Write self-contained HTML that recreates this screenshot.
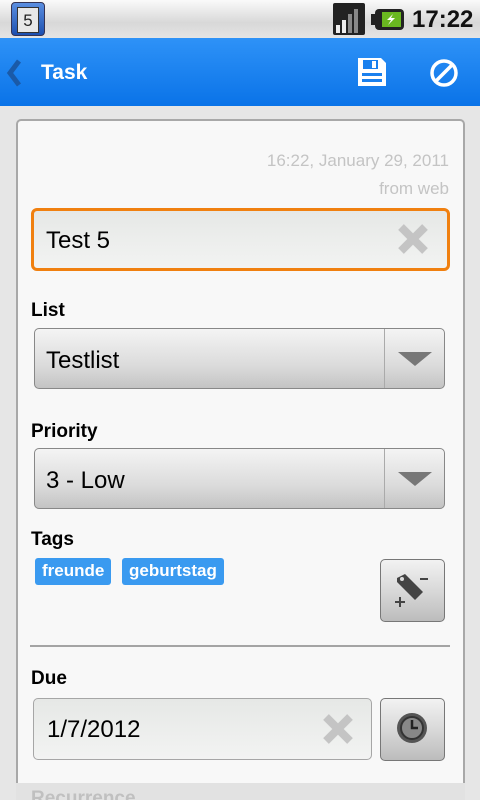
<!DOCTYPE html>
<html><head><meta charset="utf-8"><style>
*{margin:0;padding:0;box-sizing:border-box}
html,body{width:480px;height:800px;overflow:hidden}
body{background:#e6e6e6;font-family:"Liberation Sans","DejaVu Sans",sans-serif;position:relative}
.abs{position:absolute}
.status{left:0;top:0;width:480px;height:38px;background:linear-gradient(#fafafa,#d8d8d8 60%,#e4e4e4)}
.bar{left:0;top:38px;width:480px;height:68px;background:linear-gradient(#2e92f7,#0a73e8)}
.card{left:16px;top:119px;width:449px;height:681px;background:#f8f8f8;border:2px solid #a8a8a8;border-bottom:none;border-radius:5px 5px 0 0}
.lbl{font-weight:bold;font-size:19px;color:#000;left:31px}
.field{background:linear-gradient(#e6e8e6,#f2f3f2);border:1px solid #a6a6a6;border-radius:5px}
.dd{background:linear-gradient(#f4f4f4,#dcdcdc 60%,#c4c4c4);border:1px solid #888;border-radius:5px}
.txt{font-size:24px;color:#000}
.chip{background:#3a9af0;color:#fff;font-weight:bold;font-size:17px;border-radius:3px;height:27px;line-height:26px;padding:0 7px}
.btn{background:linear-gradient(#f2f2f2,#d6d6d6 55%,#bcbcbc);border:1px solid #777;border-radius:5px}
</style></head><body>
<div class="abs status"></div>
<div class="abs" style="left:11px;top:2px;width:34px;height:34px;border-radius:4px;background:linear-gradient(#5a8ee0,#1c4fb0);border:1px solid #335"></div>
<div class="abs" style="left:17px;top:7px;width:22px;height:26px;background:#e8e8e8;border:1px solid #333;font-size:17px;text-align:center;line-height:26px;color:#222">5</div>
<svg class="abs" style="left:333px;top:3px" width="32" height="32"><rect width="32" height="32" rx="2" fill="#222"/><rect x="3" y="22" width="4" height="8" fill="#eee"/><rect x="9" y="17" width="4" height="13" fill="#eee"/><rect x="15" y="11" width="4" height="19" fill="#888"/><rect x="21" y="6" width="4" height="24" fill="#888"/></svg>
<svg class="abs" style="left:371px;top:9px" width="33" height="21"><rect x="0" y="5" width="5" height="11" fill="#222"/><rect x="4" y="0" width="29" height="21" rx="4" fill="#222"/><rect x="11" y="3" width="19" height="15" fill="#6ab820"/><path d="M22 5l-6 6h4l-3 5 7-7h-4z" fill="#fff"/></svg>
<div class="abs" style="left:412px;top:6px;font-size:24px;font-weight:bold;color:#111">17:22</div>
<div class="abs bar"></div>
<svg class="abs" style="left:5px;top:59px" width="16" height="28"><path d="M14 2L5 14l9 12" fill="none" stroke="#1a5aa8" stroke-width="5"/></svg>
<div class="abs" style="left:41px;top:61px;font-size:21px;font-weight:bold;color:#fff">Task</div>
<svg class="abs" style="left:358px;top:58px" width="28" height="28"><path d="M0 0h23l5 5v23H0z" fill="#fff"/><rect x="5" y="2" width="15" height="9" fill="#1a80ee"/><rect x="14" y="3" width="4" height="7" fill="#fff"/><rect x="4" y="15" width="20" height="3" fill="#1a80ee"/><rect x="4" y="21" width="20" height="3" fill="#1a80ee"/></svg>
<svg class="abs" style="left:429px;top:58px" width="30" height="30"><circle cx="15" cy="15" r="12" fill="none" stroke="#fff" stroke-width="3.5"/><path d="M23 7L7 23" stroke="#fff" stroke-width="3.5"/></svg>
<div class="abs card"></div>
<div class="abs" style="right:31px;top:147px;font-size:17px;color:#c4c4c4;text-align:right;line-height:28px">16:22, January 29, 2011<br>from web</div>
<div class="abs field" style="left:31px;top:208px;width:419px;height:63px;border:3px solid #f08010;border-radius:6px"></div>
<div class="abs txt" style="left:46px;top:227px">Test 5</div>
<svg class="abs" style="left:397px;top:223px" width="32" height="32"><path d="M4 4L28 28M28 4L4 28" stroke="#c4c4c4" stroke-width="8"/></svg>
<div class="abs lbl" style="top:300px">List</div>
<div class="abs dd" style="left:34px;top:328px;width:411px;height:61px"></div>
<div class="abs" style="left:384px;top:329px;width:1px;height:59px;background:#aaa"></div>
<svg class="abs" style="left:398px;top:352px" width="34" height="14"><path d="M0 0h34L17 14z" fill="#777"/></svg>
<div class="abs txt" style="left:46px;top:347px">Testlist</div>
<div class="abs lbl" style="top:421px">Priority</div>
<div class="abs dd" style="left:34px;top:448px;width:411px;height:61px"></div>
<div class="abs" style="left:384px;top:449px;width:1px;height:59px;background:#aaa"></div>
<svg class="abs" style="left:398px;top:472px" width="34" height="14"><path d="M0 0h34L17 14z" fill="#777"/></svg>
<div class="abs txt" style="left:46px;top:467px">3 - Low</div>
<div class="abs lbl" style="top:529px">Tags</div>
<div class="abs chip" style="left:35px;top:558px">freunde</div>
<div class="abs chip" style="left:122px;top:558px">geburtstag</div>
<div class="abs btn" style="left:380px;top:559px;width:65px;height:63px"></div>
<svg class="abs" style="left:393px;top:570px" width="40" height="42"><path d="M4 8l8-4 18 18-8 8L4 12z" fill="#444"/><circle cx="9" cy="9" r="2" fill="#ddd"/><path d="M27 9h8" stroke="#444" stroke-width="2"/><path d="M2 32h10M7 27v10" stroke="#444" stroke-width="2"/></svg>
<div class="abs" style="left:30px;top:645px;width:420px;height:2px;background:#a4a4a4"></div>
<div class="abs lbl" style="top:668px">Due</div>
<div class="abs field" style="left:33px;top:698px;width:339px;height:62px"></div>
<div class="abs txt" style="left:47px;top:716px">1/7/2012</div>
<svg class="abs" style="left:322px;top:713px" width="32" height="32"><path d="M4 4L28 28M28 4L4 28" stroke="#c4c4c4" stroke-width="8"/></svg>
<div class="abs btn" style="left:380px;top:698px;width:65px;height:63px"></div>
<svg class="abs" style="left:396px;top:712px" width="32" height="32"><circle cx="16" cy="16" r="15" fill="#555"/><circle cx="16" cy="16" r="11" fill="#888" stroke="#333" stroke-width="2"/><path d="M16 8v8h6" stroke="#222" stroke-width="2.5" fill="none"/></svg>
<div class="abs" style="left:16px;top:783px;width:449px;height:17px;background:#e2e2e2"></div>
<div class="abs" style="left:31px;top:788px;font-size:19px;font-weight:bold;color:#c0c0c0">Recurrence</div>
</body></html>
